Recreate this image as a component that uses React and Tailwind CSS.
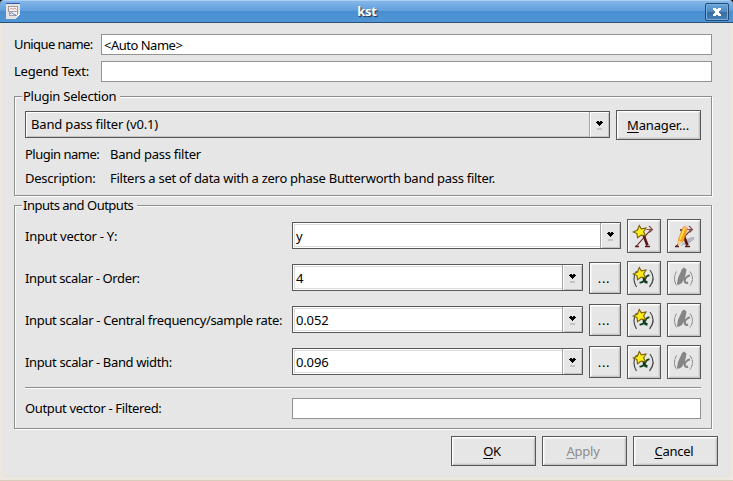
import clsx from "clsx";

const frame = "border border-[#585858] bg-[#e6e6e6]";
const bevel = clsx(frame, "shadow-[inset_1px_1px_0_#fff,inset_-1px_-1px_0_#c3c3c3,inset_2px_2px_0_#f0f0f0,inset_-2px_-2px_0_#dadada]");

function WindowIcon() {
  return (
    <svg width="15" height="17" viewBox="0 0 15 17" shapeRendering="crispEdges">
      <path d="M0 0H14V11L10 16H0Z" fill="#e4e3e2" />
      <path d="M0 .5H14" stroke="#3552a8" />
      <path d="M2.500 3.500H11.500V12.500H3.500Z" fill="#f4f4f6" stroke="#9d9d9f" />
      <path d="M2 8H12" stroke="#a0a0a0" />
      <path d="M4 6.500L5.500 5L7 6.500L8.500 5L10.500 6.500" fill="none" stroke="#d88080" shapeRendering="auto" />
      <path d="M4 10.500Q6 9 7 10.500T10 12" fill="none" stroke="#6f6fc8" shapeRendering="auto" />
      <path d="M14 11H12L10 13V16Z" fill="#fff" />
    </svg>
  );
}

function CloseIcon() {
  return (
    <svg width="10" height="8" viewBox="0 0 10 8" shapeRendering="crispEdges" fill="#fff">
      <path d="M1 0H4V1H6V0H9V2H8V3H7V5H8V6H9V8H6V7H4V8H1V6H2V5H3V3H2V2H1Z" />
    </svg>
  );
}

function Star() {
  return (
    <path
      d="M10.300 4.500L12.300 7.800L17 7L14.600 10.800L16.600 14.800L12.300 14L8.500 16.800L8 12.600L4.300 11L8.500 9Z"
      fill="#f9ec1c"
      stroke="#7d5f08"
      strokeWidth="1.100"
    />
  );
}

function VectorX() {
  return (
    <g fill="none" stroke="#5c1717">
      <path d="M7 25.500L22 8.500" strokeWidth="1.100" />
      <path d="M17.500 8.500H23M20 5L23.500 8.500L20.500 11.500" strokeWidth="1.100" stroke="#8a4a4a" />
      <path d="M13 10L18.500 24.500" strokeWidth="2.600" />
      <path d="M6 25.500H10M16 25.500H21M11 9H14" strokeWidth="1.400" />
    </g>
  );
}

function NewVectorIcon() {
  return (
    <svg width="30" height="30" viewBox="0 0 30 30">
      <VectorX />
      <Star />
    </svg>
  );
}

function EditVectorIcon() {
  return (
    <svg width="30" height="30" viewBox="0 0 30 30">
      <path d="M11 25L18 18L23 16H25L25.500 18L20 22.500Z" fill="#b4b7c4" />
      <VectorX />
      <path d="M9 24L9.500 18L14 6.500L16 5L18.500 7L14.500 20Z" fill="#f9a51b" stroke="#e08a1c" strokeWidth=".6" />
      <path d="M11 18.500L15.500 7" stroke="#ffdc4b" strokeWidth="1.800" />
      <path d="M9 24.500L9.500 19.500L13 21Z" fill="#f6d3a0" />
      <path d="M14.500 6L16.500 5L18.500 7L17.500 9Z" fill="#f6b08a" />
    </svg>
  );
}

function NewScalarIcon() {
  return (
    <svg width="30" height="30" viewBox="0 0 30 30" fill="none">
      <path d="M7.500 8Q2.500 15.500 7.500 24M21 7Q27.500 15.500 20.500 24" stroke="#4b4b4b" strokeWidth="1.200" />
      <path d="M13 12Q15 13 15 16T18.500 19.500" stroke="#123f1c" strokeWidth="2.600" />
      <path d="M20.500 12.500Q18 12 16 16T10.500 19.500" stroke="#123f1c" strokeWidth="1.700" />
      <Star />
    </svg>
  );
}

function EditScalarIcon() {
  return (
    <svg width="30" height="30" viewBox="0 0 30 30" fill="none" stroke="#858585">
      <path d="M7.500 8.500Q3.500 15.500 7.500 22.500M21 8.500Q26 15.500 21 22.500" strokeDasharray="4 .5" />
      <path d="M8 21L9 15L13 6L15 4.500L17.500 6.500L16.500 12L13 20L9 22Z" fill="#858585" stroke="none" />
      <path d="M13 12Q15 13 15.500 17T19 19.500" strokeWidth="2.200" />
      <path d="M21 12.500Q18 12.500 15.500 17" strokeWidth="1.800" />
    </svg>
  );
}

function ComboArrow() {
  return (
    <span className="flex h-full w-5 shrink-0 items-center justify-center border-l border-[#a5a5a5] bg-[#e6e6e6] pt-px shadow-[inset_1px_1px_0_#fff,inset_-1px_-1px_0_#c3c3c3]">
      <svg width="7" height="9" viewBox="0 0 7 9" shapeRendering="crispEdges">
        <path d="M1 0H3V1H4V0H6V1H7V2H6V3H5V4H4V5H3V4H2V3H1V2H0V1H1Z" fill="#000" />
        <path d="M1 7H6V9H1Z" fill="#c3c3c3" />
      </svg>
    </span>
  );
}

function EditCombo({ value, className }) {
  return (
    <div className={clsx("mt-[3px] flex h-[27px] shrink-0 self-start border border-[#585858] bg-white", className)}>
      <span className="flex flex-1 border border-r-0 border-white pt-[3px] pl-[2px] tracking-[-0.15px] shadow-[inset_1px_1px_0_#dcdcdc,inset_0_-1px_0_#dcdcdc]">
        {value}
      </span>
      <ComboArrow />
    </div>
  );
}

function IconButton({ children, label }) {
  return (
    <button aria-label={label} className={clsx("ml-1.5 flex size-[34px] shrink-0 items-center justify-center", bevel)}>
      {children}
    </button>
  );
}

function PushButton({ label, disabled, className }) {
  return (
    <button disabled={disabled} className={clsx("h-[30px] w-[85px] shrink-0", bevel, disabled && "text-[#8c8c8c]", className)}>
      <span className="underline underline-offset-2">{label[0]}</span>
      {label.slice(1)}
    </button>
  );
}

function TextField({ value, className }) {
  return <div className={clsx("flex h-[21px] items-center border border-[#929292] bg-white pl-0.5 tracking-[-0.5px]", className)}>{value}</div>;
}

function Group({ title, titleClass, className, children }) {
  return (
    <fieldset className={clsx("ml-[14px] w-[697px] border border-[#8e8e8e] px-2.5 shadow-[1px_1px_0_#fff,inset_1px_1px_0_#fff]", className)}>
      <div className="-mt-[9px] -ml-[3px] flex h-[18px]">
        <span className={clsx("bg-[#e6e6e6] pl-px leading-4", titleClass)}>{title}</span>
      </div>
      {children}
    </fieldset>
  );
}

function InputLabel({ children, className }) {
  return <span className={clsx("w-[267px] shrink-0", className)}>{children}</span>;
}

function ScalarRow({ label, labelClass, value }) {
  return (
    <div className="flex h-[34px] items-center">
      <InputLabel className={labelClass}>{label}</InputLabel>
      <EditCombo value={value} className="w-[291px]" />
      <button className={clsx("ml-1.5 h-8 w-8 shrink-0 pr-0.5 tracking-[0.6px]", bevel)}>...</button>
      <IconButton label="New scalar"><NewScalarIcon /></IconButton>
      <IconButton label="Edit scalar"><EditScalarIcon /></IconButton>
    </div>
  );
}

export default function App() {
  return (
    <div className="h-[481px] w-[733px] overflow-hidden whitespace-nowrap bg-black font-['Noto_Sans','Open_Sans',sans-serif] text-[13px] leading-[18px] tracking-[-0.25px] text-black">
      <header className="flex h-[23px] items-center rounded-t-[4px] border-t border-b border-t-[#a9cff3] border-b-[#2c5377] bg-[linear-gradient(#84b7e9_0px,#5e9edb_10px,#4a90d1_10px,#4f94d4_21px)] pr-1 pl-1.5">
        <span className="w-[23px]"><WindowIcon /></span>
        <h1 className="h-5 flex-1 text-center text-[13px] leading-[18px] font-bold text-white [text-shadow:1px_1px_1px_#1b3046]">kst</h1>
        <button aria-label="Close" className="flex h-[18px] w-6 items-center justify-center rounded-[2px] border border-[#234a70] bg-[linear-gradient(#6aa5dd_0px,#5088bd_8px,#386b9c_8px,#4681b9_16px)] shadow-[inset_0_0_0_1px_#79aee0]">
          <CloseIcon />
        </button>
      </header>
      <main className="h-[458px] border-r-[3px] border-b-[4px] border-l-[3px] border-[#ece8e0] bg-[#e6e6e6] shadow-[inset_-1px_-1px_0_#e3e2df]">
        <div className="-ml-[3px] flex flex-col pt-[11px]">
          <div className="flex h-[21px] items-center pl-[14px]">
            <span className="w-[87px] pb-0.5 tracking-[-0.6px]">Unique name:</span>
            <TextField value="<Auto Name>" className="w-[611px]" />
          </div>
          <div className="mt-1.5 flex h-[21px] items-center pl-[14px]">
            <span className="w-[87px] pb-0.5 tracking-[-0.2px]">Legend Text:</span>
            <TextField className="w-[611px]" />
          </div>
          <Group title="Plugin Selection" titleClass="w-[98px]" className="mt-[14px] h-[100px]">
            <div className="mt-1 flex h-[30px]">
              <div className={clsx("mt-px flex h-[27px] w-[585px] shadow-[inset_1px_1px_0_#fff,inset_-1px_-1px_0_#c3c3c3]", frame)}>
                <span className="flex-1 pt-[3px] pl-[5px] tracking-[-0.17px]">Band pass filter (v0.1)</span>
                <ComboArrow />
              </div>
              <span className="ml-1.5 flex"><PushButton label="Manager..." className="pr-px tracking-[-0.15px]" /></span>
            </div>
            <div className="mt-[5px] flex"><span className="w-[85px] tracking-[-0.5px]">Plugin name:</span><span>Band pass filter</span></div>
            <div className="mt-1.5 flex"><span className="w-[85px]">Description:</span><span className="tracking-[-0.27px]">Filters a set of data with a zero phase Butterworth band pass filter.</span></div>
          </Group>
          <Group title="Inputs and Outputs" titleClass="w-[115px] tracking-[-0.5px]" className="mt-[9px] h-[224px]">
            <div className="mt-1 flex flex-col gap-2">
              <div className="flex h-[34px] items-center">
                <InputLabel>Input vector - Y:</InputLabel>
                <EditCombo value="y" className="w-[329px]" />
                <IconButton label="New vector"><NewVectorIcon /></IconButton>
                <IconButton label="Edit vector"><EditVectorIcon /></IconButton>
              </div>
              <ScalarRow label="Input scalar - Order:" labelClass="tracking-[-0.38px]" value="4" />
              <ScalarRow label="Input scalar - Central frequency/sample rate:" labelClass="tracking-[-0.34px]" value="0.052" />
              <ScalarRow label="Input scalar - Band width:" labelClass="tracking-[-0.36px]" value="0.096" />
            </div>
            <div className="mt-2 h-0.5 border-t border-b border-t-[#8e8e8e] border-b-white" />
            <div className="mt-[9px] flex h-[21px] items-center">
              <InputLabel className="pb-0.5 tracking-[-0.36px]">Output vector - Filtered:</InputLabel>
              <TextField className="w-[409px]" />
            </div>
          </Group>
          <div className="mt-[7px] flex gap-1.5 pl-[451px]">
            <PushButton label="OK" className="pr-[3px]" />
            <PushButton label="Apply" disabled className="pr-[3px]" />
            <PushButton label="Cancel" className="pr-[3px]" />
          </div>
        </div>
      </main>
      <div className="-mt-px h-px bg-[#d8ccbc]" />
    </div>
  );
}
